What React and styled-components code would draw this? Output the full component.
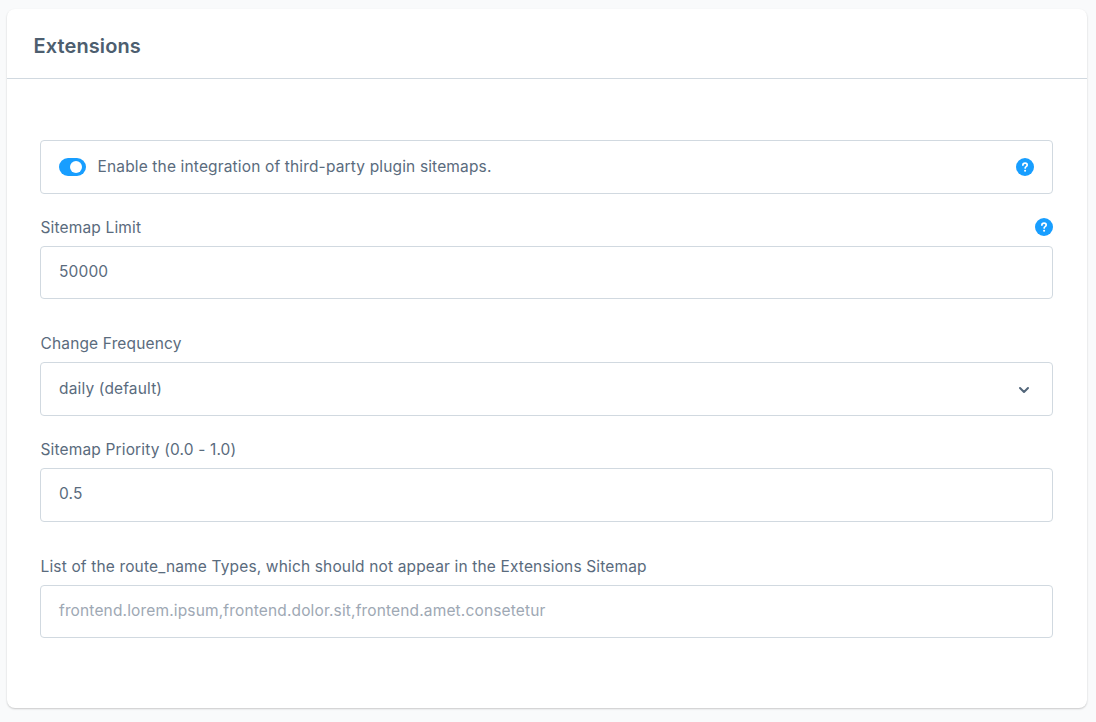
import React from 'react';
import styled, { createGlobalStyle } from 'styled-components';

const GlobalStyle = createGlobalStyle`
  html, body {
    margin: 0;
    padding: 0;
    background: #f9fafb;
    font-family: Inter, "Noto Sans", sans-serif;
    color: #52667a;
  }
`;

const Page = styled.div`
  padding: 9px 9px 14px 7px;
`;

const Card = styled.div`
  background: #ffffff;
  border-radius: 8px;
  box-shadow: 0 1px 2px rgba(0, 0, 0, 0.2);
  height: 699px;
`;

const CardHeader = styled.div`
  box-sizing: border-box;
  height: 70px;
  padding: 0 33px 0 26.5px;
  display: flex;
  align-items: center;
  border-bottom: 1px solid #d1d9e0;
`;

const CardTitle = styled.h2`
  margin: 0;
  font-size: 20px;
  font-weight: 600;
  letter-spacing: 0.1px;
  color: #4d5e6f;
  padding-top: 4px;
`;

const CardBody = styled.div`
  padding: 61px 34px 0 33px;
`;

const SwitchBox = styled.div`
  height: 54px;
  box-sizing: border-box;
  border: 1px solid #d1d9e0;
  border-radius: 4px;
  padding: 0 18px;
  display: flex;
  align-items: center;
  margin-bottom: ${props => props.$gap}px;
`;

const Track = styled.span`
  position: relative;
  display: block;
  width: 27px;
  height: 18px;
  border-radius: 9px;
  background: #189eff;
  margin-right: 11px;
  flex: none;
`;

const Knob = styled.span`
  position: absolute;
  top: 3px;
  right: 4px;
  width: 12px;
  height: 12px;
  border-radius: 50%;
  background: #ffffff;
`;

const SwitchLabel = styled.span`
  flex: 1;
  padding-left: 0.5px;
  font-size: 15.5px;
  letter-spacing: 0.15px;
  line-height: 20px;
  color: #5a6b7d;
`;

const Field = styled.div`
  margin-bottom: ${props => props.$gap}px;
`;

const LabelRow = styled.div`
  display: flex;
  justify-content: space-between;
  align-items: center;
  height: 18px;
  margin-bottom: 10px;
`;

const Label = styled.label`
  margin-top: 2px;
  padding-left: 0.5px;
  font-size: 15.5px;
  letter-spacing: 0.15px;
  line-height: 18px;
  color: #5a6b7d;
`;

const InputBox = styled.div`
  height: ${props => props.$height}px;
  box-sizing: border-box;
  border: 1px solid #d1d9e0;
  border-radius: 4px;
  padding: 0 18px ${props => props.$inset}px;
  display: flex;
  align-items: center;
  justify-content: space-between;
  font-size: 15.5px;
  letter-spacing: 0.15px;
  color: ${props => (props.$placeholder ? '#9ea8b4' : '#5a6b7d')};
`;

const HelpCircle = styled.svg`
  display: block;
  width: 18px;
  height: 18px;
  flex: none;
`;

const Help = () => (
  <HelpCircle viewBox="0 0 18 18">
    <circle cx="9" cy="9" r="9" fill="#189eff" />
    <path d="M6.9 7.1c0-1.2.9-2 2.2-2 1.2 0 2.1.8 2.1 1.8 0 .8-.4 1.2-1.1 1.7-.6.4-.9.7-.9 1.4" fill="none" stroke="#fff" strokeWidth="1.7" strokeLinecap="round" />
    <circle cx="9.1" cy="12.7" r="1.05" fill="#fff" />
  </HelpCircle>
);

const ChevronIcon = styled.svg`
  margin: 3px 4px 0 0;
`;

const Chevron = () => (
  <ChevronIcon width="12" height="8" viewBox="0 0 12 8">
    <path d="M2 2l4 4 4-4" fill="none" stroke="#52667a" strokeWidth="2" strokeLinecap="round" strokeLinejoin="round" />
  </ChevronIcon>
);

export default function App() {
  return (
    <Page>
      <GlobalStyle />
      <Card>
        <CardHeader>
          <CardTitle>Extensions</CardTitle>
        </CardHeader>
        <CardBody>
          <SwitchBox $gap={24}>
            <Track><Knob /></Track>
            <SwitchLabel>Enable the integration of third-party plugin sitemaps.</SwitchLabel>
            <Help />
          </SwitchBox>
          <Field $gap={35}>
            <LabelRow>
              <Label>Sitemap Limit</Label>
              <Help />
            </LabelRow>
            <InputBox $height={53} $inset={3}>50000</InputBox>
          </Field>
          <Field $gap={24}>
            <LabelRow>
              <Label>Change Frequency</Label>
            </LabelRow>
            <InputBox $height={54} $inset={2}>
              daily (default)
              <Chevron />
            </InputBox>
          </Field>
          <Field $gap={35}>
            <LabelRow>
              <Label>Sitemap Priority (0.0 - 1.0)</Label>
            </LabelRow>
            <InputBox $height={54} $inset={3}>0.5</InputBox>
          </Field>
          <Field $gap={0}>
            <LabelRow>
              <Label>List of the route_name Types, which should not appear in the Extensions Sitemap</Label>
            </LabelRow>
            <InputBox $height={53} $inset={3} $placeholder>frontend.lorem.ipsum,frontend.dolor.sit,frontend.amet.consetetur</InputBox>
          </Field>
        </CardBody>
      </Card>
    </Page>
  );
}
